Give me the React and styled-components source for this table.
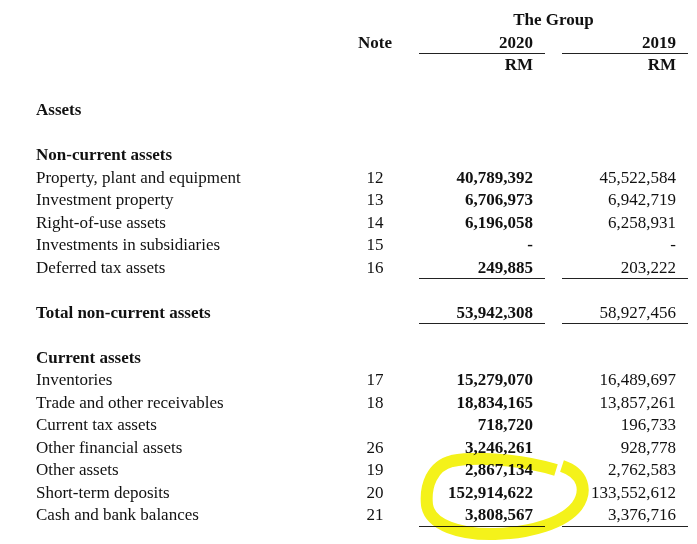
import React from "react";
import styled, { createGlobalStyle } from "styled-components";

const Global = createGlobalStyle`
  html, body { margin: 0; padding: 0; background: #fff; }
  body { font-family: "Liberation Serif", "Times New Roman", serif; color: #111; }
`;

const Page = styled.div`
  position: relative;
  width: 697px;
  height: 544px;
  overflow: hidden;
  box-sizing: border-box;
  padding: 9px 9px 0 36px;
  font-size: 17px;
  line-height: 22.5px;
`;

const Row = styled.div`
  display: flex;
  align-items: stretch;
  height: 22.5px;
  margin-top: ${(p) => (p.$gap ? "22.5px" : "0")};
`;

const Label = styled.div`
  flex: 1;
  font-weight: ${(p) => (p.$bold ? 700 : 400)};
  white-space: nowrap;
`;

const Note = styled.div`
  width: 70px;
  margin-right: 9px;
  text-align: center;
  font-weight: ${(p) => (p.$bold ? 700 : 400)};
`;

const Amount = styled.div`
  box-sizing: border-box;
  width: 126px;
  padding-right: 12px;
  text-align: right;
  white-space: nowrap;
  font-weight: ${(p) => (p.$bold ? 700 : 400)};
  border-bottom: 1px solid ${(p) => (p.$line ? "#222" : "transparent")};
  & + & { margin-left: 17px; }
`;

const Group = styled.div`
  width: 269px;
  text-align: center;
  font-weight: 700;
`;

const Highlight = styled.svg`
  position: absolute;
  left: 0;
  top: 0;
  pointer-events: none;
  mix-blend-mode: multiply;
`;

const nonCurrent = [
  ["Property, plant and equipment", "12", "40,789,392", "45,522,584"],
  ["Investment property", "13", "6,706,973", "6,942,719"],
  ["Right-of-use assets", "14", "6,196,058", "6,258,931"],
  ["Investments in subsidiaries", "15", "-", "-"],
  ["Deferred tax assets", "16", "249,885", "203,222"],
];

const current = [
  ["Inventories", "17", "15,279,070", "16,489,697"],
  ["Trade and other receivables", "18", "18,834,165", "13,857,261"],
  ["Current tax assets", "", "718,720", "196,733"],
  ["Other financial assets", "26", "3,246,261", "928,778"],
  ["Other assets", "19", "2,867,134", "2,762,583"],
  ["Short-term deposits", "20", "152,914,622", "133,552,612"],
  ["Cash and bank balances", "21", "3,808,567", "3,376,716"],
];

function DataRow({ item, last }) {
  const [label, note, a, b] = item;
  return (
    <Row>
      <Label>{label}</Label>
      <Note>{note}</Note>
      <Amount $bold $line={last}>{a}</Amount>
      <Amount $line={last}>{b}</Amount>
    </Row>
  );
}

export default function App() {
  return (
    <>
      <Global />
      <Page>
        <Row>
          <Label />
          <Note />
          <Group>The Group</Group>
        </Row>
        <Row>
          <Label />
          <Note $bold>Note</Note>
          <Amount $bold $line>2020</Amount>
          <Amount $bold $line>2019</Amount>
        </Row>
        <Row>
          <Label />
          <Note />
          <Amount $bold>RM</Amount>
          <Amount $bold>RM</Amount>
        </Row>

        <Row $gap>
          <Label $bold>Assets</Label>
        </Row>

        <Row $gap>
          <Label $bold>Non-current assets</Label>
        </Row>
        {nonCurrent.map((it, i) => (
          <DataRow key={it[0]} item={it} last={i === nonCurrent.length - 1} />
        ))}

        <Row $gap>
          <Label $bold>Total non-current assets</Label>
          <Note />
          <Amount $bold $line>53,942,308</Amount>
          <Amount $line>58,927,456</Amount>
        </Row>

        <Row $gap>
          <Label $bold>Current assets</Label>
        </Row>
        {current.map((it, i) => (
          <DataRow key={it[0]} item={it} last={i === current.length - 1} />
        ))}

        <Highlight width="697" height="544" viewBox="0 0 697 544">
          <g fill="none" stroke="#f4f21a" strokeWidth="12">
            <path
              d="M556 470 C 530 462, 482 455, 452 461 C 432 466, 425 486, 427 505 C 430 525, 460 535, 495 534 C 530 533, 564 523, 577 506 C 588 490, 583 473, 562 466"
              strokeLinecap="butt"
            />
          </g>
        </Highlight>
      </Page>
    </>
  );
}
